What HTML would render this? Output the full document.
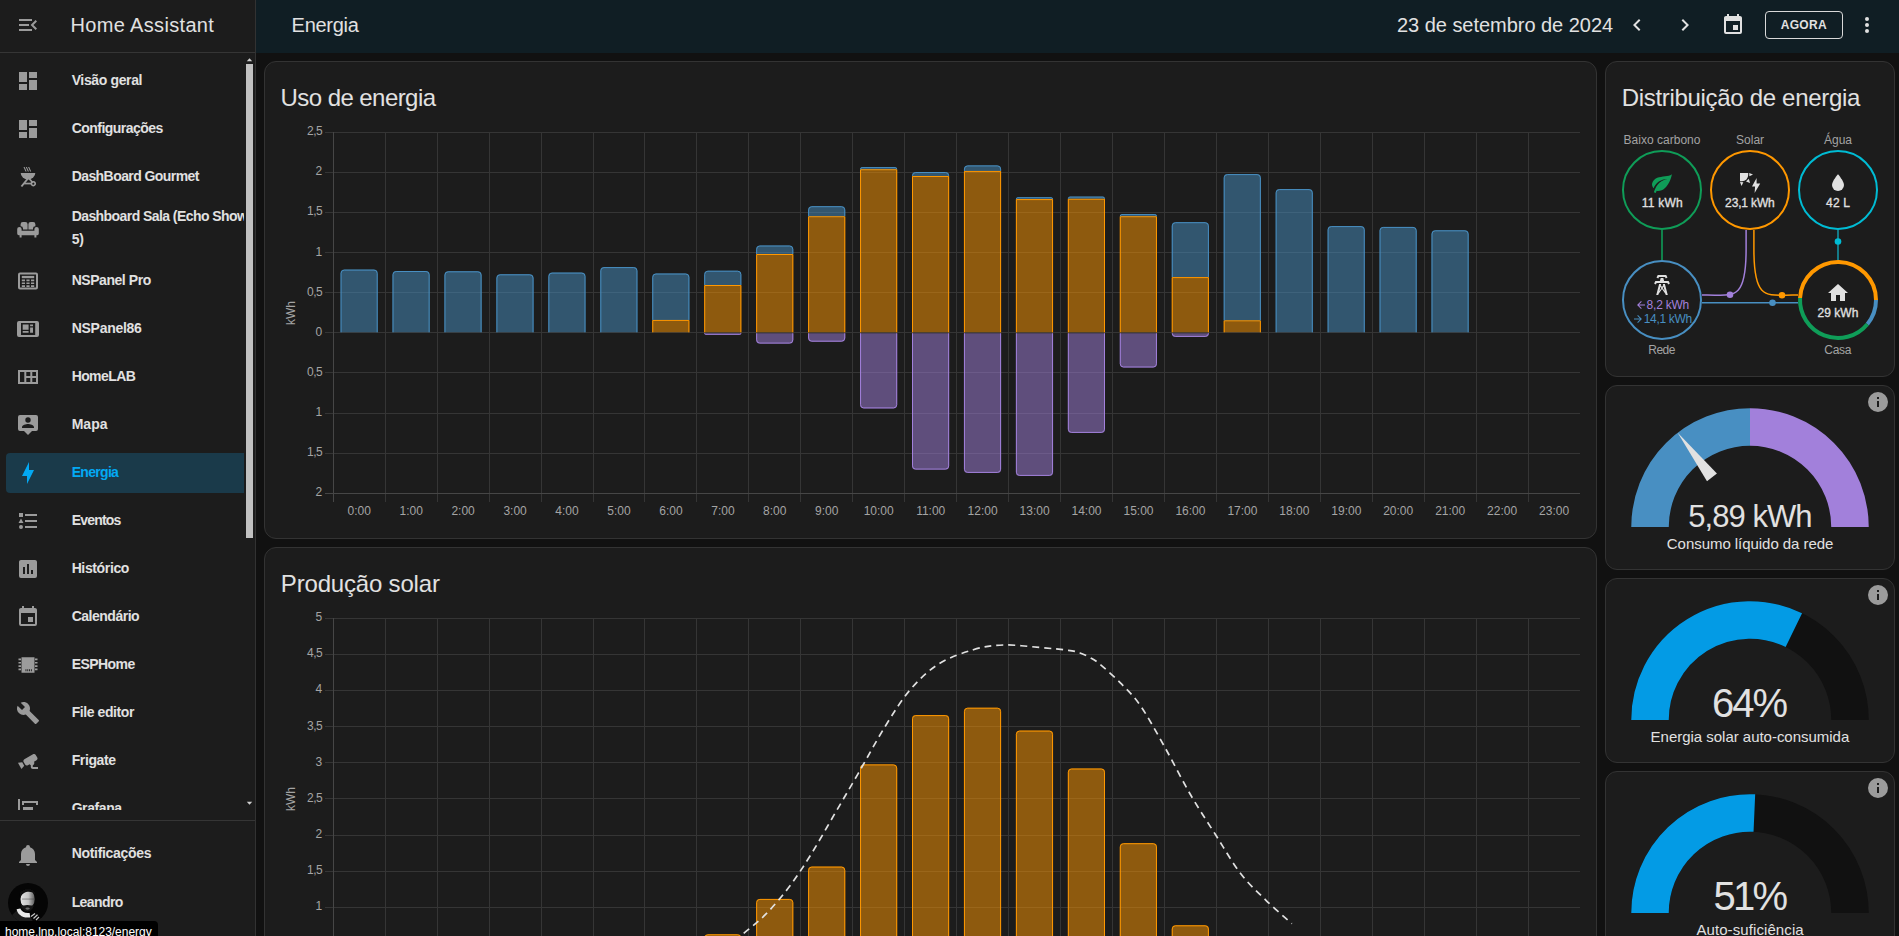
<!DOCTYPE html>
<html lang="pt-BR"><head><meta charset="utf-8"><title>Energia – Home Assistant</title>
<style>
html,body{margin:0;padding:0;background:#111111;overflow:hidden}
body{width:1899px;height:936px;position:relative;font-family:'Liberation Sans',sans-serif;color:#e1e1e1}
.t{position:absolute;white-space:pre}
.i{position:absolute;display:block}
.abs{position:absolute}
header,main,section,aside{display:contents}
.card{position:absolute;background:#1c1c1c;border:1px solid #333333;border-radius:12px;box-sizing:border-box}
svg text{font-family:'Liberation Sans',sans-serif}
</style></head><body>

<header>
<div class="abs" style="left:256px;top:0;width:1643px;height:53px;background:#101e24"></div>
<svg class="i" style="left:1625px;top:13px" width="24" height="24" viewBox="0 0 24 24" fill="#e1e1e1"><path d="M15.41,16.58L10.83,12L15.41,7.41L14,6L8,12L14,18L15.41,16.58Z"/></svg>
<svg class="i" style="left:1673px;top:13px" width="24" height="24" viewBox="0 0 24 24" fill="#e1e1e1"><path d="M8.59,16.58L13.17,12L8.59,7.41L10,6L16,12L10,18L8.59,16.58Z"/></svg>
<svg class="i" style="left:1721px;top:13px" width="24" height="24" viewBox="0 0 24 24" fill="#e1e1e1"><path d="M19,19H5V8H19M16,1V3H8V1H6V3H5C3.89,3 3,3.89 3,5V19A2,2 0 0,0 5,21H19A2,2 0 0,0 21,19V5C21,3.89 20.1,3 19,3H18V1M17,12H12V17H17V12Z"/></svg>
<svg class="i" style="left:1855px;top:13px" width="24" height="24" viewBox="0 0 24 24" fill="#e1e1e1"><path d="M12,16A2,2 0 0,1 14,18A2,2 0 0,1 12,20A2,2 0 0,1 10,18A2,2 0 0,1 12,16M12,10A2,2 0 0,1 14,12A2,2 0 0,1 12,14A2,2 0 0,1 10,12A2,2 0 0,1 12,10M12,4A2,2 0 0,1 14,6A2,2 0 0,1 12,8A2,2 0 0,1 10,6A2,2 0 0,1 12,4Z"/></svg>
<div class="abs" style="left:1765px;top:11px;width:78px;height:28px;box-sizing:border-box;border:1px solid #d9d9d9;border-radius:4px"></div>
<span class="t" style="left:291.60px;top:13.37px;font-size:20px;line-height:24px;letter-spacing:-0.290px;color:#e1e1e1;">Energia</span>
<span class="t" style="left:1397.00px;top:13.07px;font-size:20px;line-height:24px;letter-spacing:-0.035px;color:#e1e1e1;">23 de setembro de 2024</span>
<span class="t" style="left:1780.72px;top:17.74px;font-size:12px;line-height:14px;letter-spacing:0.292px;color:#e1e1e1;font-weight:700;">AGORA</span>
</header>
<main>
<section>
<div class="card" style="left:264px;top:61px;width:1333px;height:478px"></div>
<svg class="i" style="left:264px;top:61px" width="1333" height="478" viewBox="264 61 1333 478">
<path d="M325,132.5H1580 M325,172.5H1580 M325,212.5H1580 M325,252.5H1580 M325,292.5H1580 M325,332.5H1580 M325,372.5H1580 M325,413.5H1580 M325,453.5H1580 M385.5,132V502 M437.5,132V502 M489.5,132V502 M541.5,132V502 M593.5,132V502 M644.5,132V502 M696.5,132V502 M748.5,132V502 M800.5,132V502 M852.5,132V502 M904.5,132V502 M956.5,132V502 M1008.5,132V502 M1060.5,132V502 M1112.5,132V502 M1164.5,132V502 M1216.5,132V502 M1268.5,132V502 M1320.5,132V502 M1372.5,132V502 M1424.5,132V502 M1476.5,132V502 M1528.5,132V502" stroke="#353535" stroke-width="1" fill="none"/>
<path d="M333.5,132V502M325,493.5H1580" stroke="#464646" stroke-width="1" fill="none"/>
<path d="M340.55,332.3V273.3Q340.55,269.6 344.25,269.6H374.00Q377.70,269.6 377.70,273.3V332.3Z" fill="#488fc2" fill-opacity=".5"/><path d="M341.05,332.3V273.3Q341.05,270.1 344.25,270.1H374.00Q377.20,270.1 377.20,273.3V332.3" fill="none" stroke="#488fc2" stroke-width="1"/>
<path d="M392.50,332.3V274.7Q392.50,271.0 396.20,271.0H425.95Q429.65,271.0 429.65,274.7V332.3Z" fill="#488fc2" fill-opacity=".5"/><path d="M393.00,332.3V274.7Q393.00,271.5 396.20,271.5H425.95Q429.15,271.5 429.15,274.7V332.3" fill="none" stroke="#488fc2" stroke-width="1"/>
<path d="M444.45,332.3V275.0Q444.45,271.3 448.15,271.3H477.90Q481.60,271.3 481.60,275.0V332.3Z" fill="#488fc2" fill-opacity=".5"/><path d="M444.95,332.3V275.0Q444.95,271.8 448.15,271.8H477.90Q481.10,271.8 481.10,275.0V332.3" fill="none" stroke="#488fc2" stroke-width="1"/>
<path d="M496.40,332.3V278.0Q496.40,274.3 500.10,274.3H529.85Q533.55,274.3 533.55,278.0V332.3Z" fill="#488fc2" fill-opacity=".5"/><path d="M496.90,332.3V278.0Q496.90,274.8 500.10,274.8H529.85Q533.05,274.8 533.05,278.0V332.3" fill="none" stroke="#488fc2" stroke-width="1"/>
<path d="M548.35,332.3V276.3Q548.35,272.6 552.05,272.6H581.80Q585.50,272.6 585.50,276.3V332.3Z" fill="#488fc2" fill-opacity=".5"/><path d="M548.85,332.3V276.3Q548.85,273.1 552.05,273.1H581.80Q585.00,273.1 585.00,276.3V332.3" fill="none" stroke="#488fc2" stroke-width="1"/>
<path d="M600.30,332.3V270.8Q600.30,267.1 604.00,267.1H633.75Q637.45,267.1 637.45,270.8V332.3Z" fill="#488fc2" fill-opacity=".5"/><path d="M600.80,332.3V270.8Q600.80,267.6 604.00,267.6H633.75Q636.95,267.6 636.95,270.8V332.3" fill="none" stroke="#488fc2" stroke-width="1"/>
<path d="M652.25,319.9H689.40V332.3H652.25Z" fill="#ff9800" fill-opacity=".5"/><path d="M652.75,332.3V320.4H688.90V332.3" fill="none" stroke="#ff9800" stroke-width="1"/>
<path d="M652.25,319.9V277.2Q652.25,273.5 655.95,273.5H685.70Q689.40,273.5 689.40,277.2V319.9Z" fill="#488fc2" fill-opacity=".5"/><path d="M652.75,319.9V277.2Q652.75,274.0 655.95,274.0H685.70Q688.90,274.0 688.90,277.2V319.9" fill="none" stroke="#488fc2" stroke-width="1"/>
<path d="M704.20,285.0H741.35V332.3H704.20Z" fill="#ff9800" fill-opacity=".5"/><path d="M704.70,332.3V285.5H740.85V332.3" fill="none" stroke="#ff9800" stroke-width="1"/>
<path d="M704.20,285V274.4Q704.20,270.7 707.90,270.7H737.65Q741.35,270.7 741.35,274.4V285Z" fill="#488fc2" fill-opacity=".5"/><path d="M704.70,285V274.4Q704.70,271.2 707.90,271.2H737.65Q740.85,271.2 740.85,274.4V285" fill="none" stroke="#488fc2" stroke-width="1"/>
<path d="M704.20,333.3V333.3Q704.20,334.8 705.70,334.8H739.85Q741.35,334.8 741.35,333.3V333.3Z" fill="#a280db" fill-opacity=".5"/><path d="M704.70,333.3V333.3Q704.70,334.3 705.70,334.3H739.85Q740.85,334.3 740.85,333.3V333.3" fill="none" stroke="#a280db" stroke-width="1"/>
<path d="M756.15,254.0H793.30V332.3H756.15Z" fill="#ff9800" fill-opacity=".5"/><path d="M756.65,332.3V254.5H792.80V332.3" fill="none" stroke="#ff9800" stroke-width="1"/>
<path d="M756.15,254V249.2Q756.15,245.5 759.85,245.5H789.60Q793.30,245.5 793.30,249.2V254Z" fill="#488fc2" fill-opacity=".5"/><path d="M756.65,254V249.2Q756.65,246.0 759.85,246.0H789.60Q792.80,246.0 792.80,249.2V254" fill="none" stroke="#488fc2" stroke-width="1"/>
<path d="M756.15,333.3V339.90000000000003Q756.15,343.6 759.85,343.6H789.60Q793.30,343.6 793.30,339.90000000000003V333.3Z" fill="#a280db" fill-opacity=".5"/><path d="M756.65,333.3V339.90000000000003Q756.65,343.1 759.85,343.1H789.60Q792.80,343.1 792.80,339.90000000000003V333.3" fill="none" stroke="#a280db" stroke-width="1"/>
<path d="M808.10,216.2H845.25V332.3H808.10Z" fill="#ff9800" fill-opacity=".5"/><path d="M808.60,332.3V216.7H844.75V332.3" fill="none" stroke="#ff9800" stroke-width="1"/>
<path d="M808.10,216.2V209.89999999999998Q808.10,206.2 811.80,206.2H841.55Q845.25,206.2 845.25,209.89999999999998V216.2Z" fill="#488fc2" fill-opacity=".5"/><path d="M808.60,216.2V209.89999999999998Q808.60,206.7 811.80,206.7H841.55Q844.75,206.7 844.75,209.89999999999998V216.2" fill="none" stroke="#488fc2" stroke-width="1"/>
<path d="M808.10,333.3V338.0Q808.10,341.7 811.80,341.7H841.55Q845.25,341.7 845.25,338.0V333.3Z" fill="#a280db" fill-opacity=".5"/><path d="M808.60,333.3V338.0Q808.60,341.2 811.80,341.2H841.55Q844.75,341.2 844.75,338.0V333.3" fill="none" stroke="#a280db" stroke-width="1"/>
<path d="M860.05,169.2H897.20V332.3H860.05Z" fill="#ff9800" fill-opacity=".5"/><path d="M860.55,332.3V169.7H896.70V332.3" fill="none" stroke="#ff9800" stroke-width="1"/>
<path d="M860.05,169.2V169.2Q860.05,167.1 862.15,167.1H895.10Q897.20,167.1 897.20,169.2V169.2Z" fill="#488fc2" fill-opacity=".5"/><path d="M860.55,169.2V169.2Q860.55,167.6 862.15,167.6H895.10Q896.70,167.6 896.70,169.2V169.2" fill="none" stroke="#488fc2" stroke-width="1"/>
<path d="M860.05,333.3V404.7Q860.05,408.4 863.75,408.4H893.50Q897.20,408.4 897.20,404.7V333.3Z" fill="#a280db" fill-opacity=".5"/><path d="M860.55,333.3V404.7Q860.55,407.9 863.75,407.9H893.50Q896.70,407.9 896.70,404.7V333.3" fill="none" stroke="#a280db" stroke-width="1"/>
<path d="M912.00,176.0H949.15V332.3H912.00Z" fill="#ff9800" fill-opacity=".5"/><path d="M912.50,332.3V176.5H948.65V332.3" fill="none" stroke="#ff9800" stroke-width="1"/>
<path d="M912.00,176V175.7Q912.00,172.0 915.70,172.0H945.45Q949.15,172.0 949.15,175.7V176Z" fill="#488fc2" fill-opacity=".5"/><path d="M912.50,176V175.7Q912.50,172.5 915.70,172.5H945.45Q948.65,172.5 948.65,175.7V176" fill="none" stroke="#488fc2" stroke-width="1"/>
<path d="M912.00,333.3V465.90000000000003Q912.00,469.6 915.70,469.6H945.45Q949.15,469.6 949.15,465.90000000000003V333.3Z" fill="#a280db" fill-opacity=".5"/><path d="M912.50,333.3V465.90000000000003Q912.50,469.1 915.70,469.1H945.45Q948.65,469.1 948.65,465.90000000000003V333.3" fill="none" stroke="#a280db" stroke-width="1"/>
<path d="M963.95,170.9H1001.10V332.3H963.95Z" fill="#ff9800" fill-opacity=".5"/><path d="M964.45,332.3V171.4H1000.60V332.3" fill="none" stroke="#ff9800" stroke-width="1"/>
<path d="M963.95,170.9V169.1Q963.95,165.4 967.65,165.4H997.40Q1001.10,165.4 1001.10,169.1V170.9Z" fill="#488fc2" fill-opacity=".5"/><path d="M964.45,170.9V169.1Q964.45,165.9 967.65,165.9H997.40Q1000.60,165.9 1000.60,169.1V170.9" fill="none" stroke="#488fc2" stroke-width="1"/>
<path d="M963.95,333.3V469.2Q963.95,472.9 967.65,472.9H997.40Q1001.10,472.9 1001.10,469.2V333.3Z" fill="#a280db" fill-opacity=".5"/><path d="M964.45,333.3V469.2Q964.45,472.4 967.65,472.4H997.40Q1000.60,472.4 1000.60,469.2V333.3" fill="none" stroke="#a280db" stroke-width="1"/>
<path d="M1015.90,199.1H1053.05V332.3H1015.90Z" fill="#ff9800" fill-opacity=".5"/><path d="M1016.40,332.3V199.6H1052.55V332.3" fill="none" stroke="#ff9800" stroke-width="1"/>
<path d="M1015.90,199.1V199.1Q1015.90,197.2 1017.80,197.2H1051.15Q1053.05,197.2 1053.05,199.1V199.1Z" fill="#488fc2" fill-opacity=".5"/><path d="M1016.40,199.1V199.1Q1016.40,197.7 1017.80,197.7H1051.15Q1052.55,197.7 1052.55,199.1V199.1" fill="none" stroke="#488fc2" stroke-width="1"/>
<path d="M1015.90,333.3V472.2Q1015.90,475.9 1019.60,475.9H1049.35Q1053.05,475.9 1053.05,472.2V333.3Z" fill="#a280db" fill-opacity=".5"/><path d="M1016.40,333.3V472.2Q1016.40,475.4 1019.60,475.4H1049.35Q1052.55,475.4 1052.55,472.2V333.3" fill="none" stroke="#a280db" stroke-width="1"/>
<path d="M1067.85,198.7H1105.00V332.3H1067.85Z" fill="#ff9800" fill-opacity=".5"/><path d="M1068.35,332.3V199.2H1104.50V332.3" fill="none" stroke="#ff9800" stroke-width="1"/>
<path d="M1067.85,198.7V198.7Q1067.85,196.6 1069.95,196.6H1102.90Q1105.00,196.6 1105.00,198.7V198.7Z" fill="#488fc2" fill-opacity=".5"/><path d="M1068.35,198.7V198.7Q1068.35,197.1 1069.95,197.1H1102.90Q1104.50,197.1 1104.50,198.7V198.7" fill="none" stroke="#488fc2" stroke-width="1"/>
<path d="M1067.85,333.3V429.2Q1067.85,432.9 1071.55,432.9H1101.30Q1105.00,432.9 1105.00,429.2V333.3Z" fill="#a280db" fill-opacity=".5"/><path d="M1068.35,333.3V429.2Q1068.35,432.4 1071.55,432.4H1101.30Q1104.50,432.4 1104.50,429.2V333.3" fill="none" stroke="#a280db" stroke-width="1"/>
<path d="M1119.80,216.2H1156.95V332.3H1119.80Z" fill="#ff9800" fill-opacity=".5"/><path d="M1120.30,332.3V216.7H1156.45V332.3" fill="none" stroke="#ff9800" stroke-width="1"/>
<path d="M1119.80,216.2V216.2Q1119.80,214.1 1121.90,214.1H1154.85Q1156.95,214.1 1156.95,216.2V216.2Z" fill="#488fc2" fill-opacity=".5"/><path d="M1120.30,216.2V216.2Q1120.30,214.6 1121.90,214.6H1154.85Q1156.45,214.6 1156.45,216.2V216.2" fill="none" stroke="#488fc2" stroke-width="1"/>
<path d="M1119.80,333.3V363.8Q1119.80,367.5 1123.50,367.5H1153.25Q1156.95,367.5 1156.95,363.8V333.3Z" fill="#a280db" fill-opacity=".5"/><path d="M1120.30,333.3V363.8Q1120.30,367.0 1123.50,367.0H1153.25Q1156.45,367.0 1156.45,363.8V333.3" fill="none" stroke="#a280db" stroke-width="1"/>
<path d="M1171.75,277.1H1208.90V332.3H1171.75Z" fill="#ff9800" fill-opacity=".5"/><path d="M1172.25,332.3V277.6H1208.40V332.3" fill="none" stroke="#ff9800" stroke-width="1"/>
<path d="M1171.75,277.1V225.89999999999998Q1171.75,222.2 1175.45,222.2H1205.20Q1208.90,222.2 1208.90,225.89999999999998V277.1Z" fill="#488fc2" fill-opacity=".5"/><path d="M1172.25,277.1V225.89999999999998Q1172.25,222.7 1175.45,222.7H1205.20Q1208.40,222.7 1208.40,225.89999999999998V277.1" fill="none" stroke="#488fc2" stroke-width="1"/>
<path d="M1171.75,333.3V333.3Q1171.75,336.9 1175.35,336.9H1205.30Q1208.90,336.9 1208.90,333.3V333.3Z" fill="#a280db" fill-opacity=".5"/><path d="M1172.25,333.3V333.3Q1172.25,336.4 1175.35,336.4H1205.30Q1208.40,336.4 1208.40,333.3V333.3" fill="none" stroke="#a280db" stroke-width="1"/>
<path d="M1223.70,320.3H1260.85V332.3H1223.70Z" fill="#ff9800" fill-opacity=".5"/><path d="M1224.20,332.3V320.8H1260.35V332.3" fill="none" stroke="#ff9800" stroke-width="1"/>
<path d="M1223.70,320.3V177.79999999999998Q1223.70,174.1 1227.40,174.1H1257.15Q1260.85,174.1 1260.85,177.79999999999998V320.3Z" fill="#488fc2" fill-opacity=".5"/><path d="M1224.20,320.3V177.79999999999998Q1224.20,174.6 1227.40,174.6H1257.15Q1260.35,174.6 1260.35,177.79999999999998V320.3" fill="none" stroke="#488fc2" stroke-width="1"/>
<path d="M1275.65,332.3V192.79999999999998Q1275.65,189.1 1279.35,189.1H1309.10Q1312.80,189.1 1312.80,192.79999999999998V332.3Z" fill="#488fc2" fill-opacity=".5"/><path d="M1276.15,332.3V192.79999999999998Q1276.15,189.6 1279.35,189.6H1309.10Q1312.30,189.6 1312.30,192.79999999999998V332.3" fill="none" stroke="#488fc2" stroke-width="1"/>
<path d="M1327.60,332.3V229.79999999999998Q1327.60,226.1 1331.30,226.1H1361.05Q1364.75,226.1 1364.75,229.79999999999998V332.3Z" fill="#488fc2" fill-opacity=".5"/><path d="M1328.10,332.3V229.79999999999998Q1328.10,226.6 1331.30,226.6H1361.05Q1364.25,226.6 1364.25,229.79999999999998V332.3" fill="none" stroke="#488fc2" stroke-width="1"/>
<path d="M1379.55,332.3V230.6Q1379.55,226.9 1383.25,226.9H1413.00Q1416.70,226.9 1416.70,230.6V332.3Z" fill="#488fc2" fill-opacity=".5"/><path d="M1380.05,332.3V230.6Q1380.05,227.4 1383.25,227.4H1413.00Q1416.20,227.4 1416.20,230.6V332.3" fill="none" stroke="#488fc2" stroke-width="1"/>
<path d="M1431.50,332.3V234.0Q1431.50,230.3 1435.20,230.3H1464.95Q1468.65,230.3 1468.65,234.0V332.3Z" fill="#488fc2" fill-opacity=".5"/><path d="M1432.00,332.3V234.0Q1432.00,230.8 1435.20,230.8H1464.95Q1468.15,230.8 1468.15,234.0V332.3" fill="none" stroke="#488fc2" stroke-width="1"/>
<text x="322.3" y="135.2" font-size="12" fill="#a4a4a4" text-anchor="end" letter-spacing="-0.5">2,5</text>
<text x="322.3" y="175.3" font-size="12" fill="#a4a4a4" text-anchor="end">2</text>
<text x="322.3" y="215.4" font-size="12" fill="#a4a4a4" text-anchor="end" letter-spacing="-0.5">1,5</text>
<text x="322.3" y="255.5" font-size="12" fill="#a4a4a4" text-anchor="end">1</text>
<text x="322.3" y="295.6" font-size="12" fill="#a4a4a4" text-anchor="end" letter-spacing="-0.5">0,5</text>
<text x="322.3" y="335.8" font-size="12" fill="#a4a4a4" text-anchor="end">0</text>
<text x="322.3" y="375.9" font-size="12" fill="#a4a4a4" text-anchor="end" letter-spacing="-0.5">0,5</text>
<text x="322.3" y="416.0" font-size="12" fill="#a4a4a4" text-anchor="end">1</text>
<text x="322.3" y="456.1" font-size="12" fill="#a4a4a4" text-anchor="end" letter-spacing="-0.5">1,5</text>
<text x="322.3" y="496.2" font-size="12" fill="#a4a4a4" text-anchor="end">2</text>
<text x="359.2" y="515" font-size="12" fill="#a4a4a4" text-anchor="middle">0:00</text>
<text x="411.2" y="515" font-size="12" fill="#a4a4a4" text-anchor="middle">1:00</text>
<text x="463.1" y="515" font-size="12" fill="#a4a4a4" text-anchor="middle">2:00</text>
<text x="515.1" y="515" font-size="12" fill="#a4a4a4" text-anchor="middle">3:00</text>
<text x="567.0" y="515" font-size="12" fill="#a4a4a4" text-anchor="middle">4:00</text>
<text x="619.0" y="515" font-size="12" fill="#a4a4a4" text-anchor="middle">5:00</text>
<text x="670.9" y="515" font-size="12" fill="#a4a4a4" text-anchor="middle">6:00</text>
<text x="722.9" y="515" font-size="12" fill="#a4a4a4" text-anchor="middle">7:00</text>
<text x="774.8" y="515" font-size="12" fill="#a4a4a4" text-anchor="middle">8:00</text>
<text x="826.8" y="515" font-size="12" fill="#a4a4a4" text-anchor="middle">9:00</text>
<text x="878.7" y="515" font-size="12" fill="#a4a4a4" text-anchor="middle">10:00</text>
<text x="930.7" y="515" font-size="12" fill="#a4a4a4" text-anchor="middle">11:00</text>
<text x="982.6" y="515" font-size="12" fill="#a4a4a4" text-anchor="middle">12:00</text>
<text x="1034.6" y="515" font-size="12" fill="#a4a4a4" text-anchor="middle">13:00</text>
<text x="1086.5" y="515" font-size="12" fill="#a4a4a4" text-anchor="middle">14:00</text>
<text x="1138.5" y="515" font-size="12" fill="#a4a4a4" text-anchor="middle">15:00</text>
<text x="1190.4" y="515" font-size="12" fill="#a4a4a4" text-anchor="middle">16:00</text>
<text x="1242.4" y="515" font-size="12" fill="#a4a4a4" text-anchor="middle">17:00</text>
<text x="1294.3" y="515" font-size="12" fill="#a4a4a4" text-anchor="middle">18:00</text>
<text x="1346.3" y="515" font-size="12" fill="#a4a4a4" text-anchor="middle">19:00</text>
<text x="1398.2" y="515" font-size="12" fill="#a4a4a4" text-anchor="middle">20:00</text>
<text x="1450.2" y="515" font-size="12" fill="#a4a4a4" text-anchor="middle">21:00</text>
<text x="1502.1" y="515" font-size="12" fill="#a4a4a4" text-anchor="middle">22:00</text>
<text x="1554.1" y="515" font-size="12" fill="#a4a4a4" text-anchor="middle">23:00</text>
<text transform="translate(295,313) rotate(-90)" font-size="12" fill="#a4a4a4" text-anchor="middle">kWh</text>
</svg>
<span class="t" style="left:280.54px;top:83.48px;font-size:24px;line-height:29px;letter-spacing:-0.562px;color:#e1e1e1;">Uso de energia</span>
</section>
<section>
<div class="card" style="left:264px;top:547px;width:1333px;height:478px"></div>
<svg class="i" style="left:264px;top:547px" width="1333" height="389" viewBox="264 547 1333 389">
<path d="M325,618.5H1580 M325,654.5H1580 M325,690.5H1580 M325,726.5H1580 M325,762.5H1580 M325,798.5H1580 M325,835.5H1580 M325,871.5H1580 M325,907.5H1580 M325,943.5H1580 M385.5,618V990 M437.5,618V990 M489.5,618V990 M541.5,618V990 M593.5,618V990 M644.5,618V990 M696.5,618V990 M748.5,618V990 M800.5,618V990 M852.5,618V990 M904.5,618V990 M956.5,618V990 M1008.5,618V990 M1060.5,618V990 M1112.5,618V990 M1164.5,618V990 M1216.5,618V990 M1268.5,618V990 M1320.5,618V990 M1372.5,618V990 M1424.5,618V990 M1476.5,618V990 M1528.5,618V990" stroke="#353535" stroke-width="1" fill="none"/>
<path d="M333.5,618V990" stroke="#464646" stroke-width="1" fill="none"/>
<path d="M704.20,979.4V938.0Q704.20,934.3 707.90,934.3H737.65Q741.35,934.3 741.35,938.0V979.4Z" fill="#ff9800" fill-opacity=".5"/><path d="M704.70,979.4V938.0Q704.70,934.8 707.90,934.8H737.65Q740.85,934.8 740.85,938.0V979.4" fill="none" stroke="#ff9800" stroke-width="1"/>
<path d="M756.15,979.4V902.6Q756.15,898.9 759.85,898.9H789.60Q793.30,898.9 793.30,902.6V979.4Z" fill="#ff9800" fill-opacity=".5"/><path d="M756.65,979.4V902.6Q756.65,899.4 759.85,899.4H789.60Q792.80,899.4 792.80,902.6V979.4" fill="none" stroke="#ff9800" stroke-width="1"/>
<path d="M808.10,979.4V870.3000000000001Q808.10,866.6 811.80,866.6H841.55Q845.25,866.6 845.25,870.3000000000001V979.4Z" fill="#ff9800" fill-opacity=".5"/><path d="M808.60,979.4V870.3000000000001Q808.60,867.1 811.80,867.1H841.55Q844.75,867.1 844.75,870.3000000000001V979.4" fill="none" stroke="#ff9800" stroke-width="1"/>
<path d="M860.05,979.4V768.1Q860.05,764.4 863.75,764.4H893.50Q897.20,764.4 897.20,768.1V979.4Z" fill="#ff9800" fill-opacity=".5"/><path d="M860.55,979.4V768.1Q860.55,764.9 863.75,764.9H893.50Q896.70,764.9 896.70,768.1V979.4" fill="none" stroke="#ff9800" stroke-width="1"/>
<path d="M912.00,979.4V718.8000000000001Q912.00,715.1 915.70,715.1H945.45Q949.15,715.1 949.15,718.8000000000001V979.4Z" fill="#ff9800" fill-opacity=".5"/><path d="M912.50,979.4V718.8000000000001Q912.50,715.6 915.70,715.6H945.45Q948.65,715.6 948.65,718.8000000000001V979.4" fill="none" stroke="#ff9800" stroke-width="1"/>
<path d="M963.95,979.4V711.4000000000001Q963.95,707.7 967.65,707.7H997.40Q1001.10,707.7 1001.10,711.4000000000001V979.4Z" fill="#ff9800" fill-opacity=".5"/><path d="M964.45,979.4V711.4000000000001Q964.45,708.2 967.65,708.2H997.40Q1000.60,708.2 1000.60,711.4000000000001V979.4" fill="none" stroke="#ff9800" stroke-width="1"/>
<path d="M1015.90,979.4V734.3000000000001Q1015.90,730.6 1019.60,730.6H1049.35Q1053.05,730.6 1053.05,734.3000000000001V979.4Z" fill="#ff9800" fill-opacity=".5"/><path d="M1016.40,979.4V734.3000000000001Q1016.40,731.1 1019.60,731.1H1049.35Q1052.55,731.1 1052.55,734.3000000000001V979.4" fill="none" stroke="#ff9800" stroke-width="1"/>
<path d="M1067.85,979.4V772.2Q1067.85,768.5 1071.55,768.5H1101.30Q1105.00,768.5 1105.00,772.2V979.4Z" fill="#ff9800" fill-opacity=".5"/><path d="M1068.35,979.4V772.2Q1068.35,769.0 1071.55,769.0H1101.30Q1104.50,769.0 1104.50,772.2V979.4" fill="none" stroke="#ff9800" stroke-width="1"/>
<path d="M1119.80,979.4V846.9000000000001Q1119.80,843.2 1123.50,843.2H1153.25Q1156.95,843.2 1156.95,846.9000000000001V979.4Z" fill="#ff9800" fill-opacity=".5"/><path d="M1120.30,979.4V846.9000000000001Q1120.30,843.7 1123.50,843.7H1153.25Q1156.45,843.7 1156.45,846.9000000000001V979.4" fill="none" stroke="#ff9800" stroke-width="1"/>
<path d="M1171.75,979.4V929.0Q1171.75,925.3 1175.45,925.3H1205.20Q1208.90,925.3 1208.90,929.0V979.4Z" fill="#ff9800" fill-opacity=".5"/><path d="M1172.25,979.4V929.0Q1172.25,925.8 1175.45,925.8H1205.20Q1208.40,925.8 1208.40,929.0V979.4" fill="none" stroke="#ff9800" stroke-width="1"/>
<path d="M728,947C730.3,945.0 735.4,940.5 741.7,935C748.0,929.5 757.8,922.4 765.8,914.2C773.8,906.0 782.4,895.9 790,885.8C797.6,875.6 804.2,865.4 811.7,853.3C819.2,841.2 827.2,826.6 835,813.3C842.8,800.0 850.0,787.7 858.3,773.3C866.6,758.9 876.4,740.6 885,726.7C893.6,712.8 901.1,700.4 910,690C918.9,679.6 927.8,670.9 938.3,664.2C948.8,657.5 962.5,652.9 973.3,649.7C984.1,646.5 992.2,645.4 1003.3,645C1014.4,644.6 1029.2,646.6 1040,647.5C1050.8,648.4 1061.6,649.4 1068.3,650.3C1075.0,651.2 1076.4,651.8 1080,653C1083.6,654.2 1086.7,655.6 1090,657.5C1093.3,659.4 1094.7,659.8 1100,664.2C1105.3,668.7 1114.9,677.2 1121.7,684.2C1128.5,691.2 1133.8,695.9 1141,706.5C1148.2,717.1 1157.0,733.2 1165.2,747.9C1173.4,762.6 1182.0,780.0 1190.4,794.5C1198.8,809.0 1207.2,821.6 1215.6,834.8C1224.0,848.0 1232.4,862.9 1240.8,873.8C1249.2,884.7 1257.5,892.0 1266,900.3C1274.5,908.6 1287.6,919.8 1291.9,923.7" fill="none" stroke="#e1e1e1" stroke-width="1.7" stroke-dasharray="7 5" stroke-dashoffset="3"/>
<text x="322.3" y="621.2" font-size="12" fill="#a4a4a4" text-anchor="end">5</text>
<text x="322.3" y="657.3" font-size="12" fill="#a4a4a4" text-anchor="end" letter-spacing="-0.5">4,5</text>
<text x="322.3" y="693.4" font-size="12" fill="#a4a4a4" text-anchor="end">4</text>
<text x="322.3" y="729.6" font-size="12" fill="#a4a4a4" text-anchor="end" letter-spacing="-0.5">3,5</text>
<text x="322.3" y="765.7" font-size="12" fill="#a4a4a4" text-anchor="end">3</text>
<text x="322.3" y="801.8" font-size="12" fill="#a4a4a4" text-anchor="end" letter-spacing="-0.5">2,5</text>
<text x="322.3" y="837.9" font-size="12" fill="#a4a4a4" text-anchor="end">2</text>
<text x="322.3" y="874.0" font-size="12" fill="#a4a4a4" text-anchor="end" letter-spacing="-0.5">1,5</text>
<text x="322.3" y="910.2" font-size="12" fill="#a4a4a4" text-anchor="end">1</text>
<text transform="translate(295,799) rotate(-90)" font-size="12" fill="#a4a4a4" text-anchor="middle">kWh</text>
</svg>
<span class="t" style="left:280.84px;top:569.48px;font-size:24px;line-height:29px;letter-spacing:-0.181px;color:#e1e1e1;">Produção solar</span>
</section>
<section>
<div class="card" style="left:1605px;top:61px;width:290px;height:316px"></div>
<svg class="i" style="left:1605px;top:61px" width="290" height="316" viewBox="1605 61 290 316">
<path d="M1662,230V260" stroke="#0f9d58" stroke-width="1.6"/>
<path d="M1838,230V260" stroke="#1593a3" stroke-width="1.6"/>
<defs><clipPath id="fl"><rect x="1702" y="228" width="96" height="110"/></clipPath></defs>
<g clip-path="url(#fl)"><g transform="translate(1685,230) scale(1.3)" fill="none" stroke-width="1.15">
<path d="M47,0 v15 c0,40 -10,35 -30,35 h-20" stroke="#a280db"/>
<path d="M53,0 v15 c0,40 10,35 30,35 h25" stroke="#ff9800"/>
<path d="M0,56 H100" stroke="#488fc2"/>
</g></g>
<circle cx="1730" cy="294.7" r="3.3" fill="#a280db"/><circle cx="1782" cy="295.2" r="3.3" fill="#ff9800"/><circle cx="1772.5" cy="302.8" r="3.3" fill="#488fc2"/><circle cx="1838" cy="241.5" r="3.3" fill="#00bcd4"/>
<circle cx="1662" cy="190" r="39" fill="none" stroke="#0f9d58" stroke-width="2"/>
<circle cx="1750" cy="190" r="39" fill="none" stroke="#ff9800" stroke-width="2"/>
<circle cx="1838" cy="190" r="39" fill="none" stroke="#00bcd4" stroke-width="2"/>
<circle cx="1662" cy="300" r="39" fill="none" stroke="#488fc2" stroke-width="2"/>
<path d="M1876.00,300.00A38,38 0 0 1 1867.32,324.17" fill="none" stroke="#488fc2" stroke-width="4"/>
<path d="M1867.32,324.17A38,38 0 0 1 1800.05,298.01" fill="none" stroke="#0f9d58" stroke-width="4"/>
<path d="M1800.05,298.01A38,38 0 0 1 1876.00,300.00" fill="none" stroke="#ff9800" stroke-width="4"/>
</svg>
<svg class="i" style="left:1650px;top:171px" width="24" height="24" viewBox="0 0 24 24" fill="#0f9d58"><path d="M17,8C8,10 5.9,16.17 3.82,21.34L5.71,22L6.66,19.7C7.14,19.87 7.64,20 8,20C19,20 22,3 22,3C21,5 14,5.25 9,6.25C4,7.25 2,11.5 2,13.5C2,15.5 3.75,17.25 3.75,17.25C7,8 17,8 17,8Z"/></svg>
<svg class="i" style="left:1738px;top:171px" width="24" height="24" viewBox="0 0 24 24" fill="#e1e1e1"><path d="M2,2H10.2V4A6.2,6.2 0 0 1 4,10.2H2Z"/><path d="M11.2,2L15,3.6L11.4,5.3Z"/><path d="M10.7,7.8L12.1,11.9L8,10.4Z"/><path d="M2,11.1L5.4,11.3L3.5,15Z"/><path d="M18.6,7.1L14,15.4H17.1L16.6,21.9L22.2,12.4H18.6Z"/></svg>
<svg class="i" style="left:1826px;top:171px" width="24" height="24" viewBox="0 0 24 24" fill="#e1e1e1"><path d="M12,20A6,6 0 0,1 6,14C6,10 12,3.25 12,3.25C12,3.25 18,10 18,14A6,6 0 0,1 12,20Z"/></svg>
<svg class="i" style="left:1650px;top:272.7px" width="24" height="24" viewBox="0 0 24 24" fill="#e1e1e1"><path d="M8.28,5.45L6.5,4.55L7.76,2H16.23L17.5,4.55L15.72,5.44L15,4H9L8.28,5.45M18.62,8H14.09L13.3,5H10.7L9.91,8H5.38L4.1,10.55L5.89,11.44L6.62,10H17.38L18.1,11.45L19.89,10.56L18.62,8M17.77,22H15.7L15.46,21.1L12,15.9L8.53,21.1L8.3,22H6.23L9.12,11H11.19L10.83,12.35L12,14.1L13.16,12.35L12.81,11H14.88L17.77,22M11.4,15L10.5,13.65L9.32,18.13L11.4,15M14.68,18.12L13.5,13.64L12.6,15L14.68,18.12Z"/></svg>
<svg class="i" style="left:1826px;top:281px" width="24" height="24" viewBox="0 0 24 24" fill="#e1e1e1"><path d="M10,20V14H14V20H19V12H22L12,3L2,12H5V20H10Z"/></svg>
<svg class="i" style="left:1634.9px;top:299.0px" width="12" height="12" viewBox="0 0 24 24" fill="#a280db"><path d="M20,11V13H8L13.5,18.5L12.08,19.92L4.16,12L12.08,4.08L13.5,5.5L8,11H20Z"/></svg>
<svg class="i" style="left:1631.9px;top:312.8px" width="12" height="12" viewBox="0 0 24 24" fill="#488fc2"><path d="M4,11V13H16L10.5,18.5L11.92,19.92L19.84,12L11.92,4.08L10.5,5.5L16,11H4Z"/></svg>
<span class="t" style="left:1621.74px;top:83.48px;font-size:24px;line-height:29px;letter-spacing:-0.314px;color:#e1e1e1;">Distribuição de energia</span>
<span class="t" style="left:1623.52px;top:133.04px;font-size:12px;line-height:14px;letter-spacing:0.018px;color:#a3a3a3;">Baixo carbono</span>
<span class="t" style="left:1736.02px;top:133.04px;font-size:12px;line-height:14px;letter-spacing:0.006px;color:#a3a3a3;">Solar</span>
<span class="t" style="left:1824.12px;top:133.04px;font-size:12px;line-height:14px;letter-spacing:-0.030px;color:#a3a3a3;">Água</span>
<span class="t" style="left:1648.32px;top:343.14px;font-size:12px;line-height:14px;letter-spacing:-0.549px;color:#a3a3a3;">Rede</span>
<span class="t" style="left:1824.32px;top:343.14px;font-size:12px;line-height:14px;letter-spacing:-0.325px;color:#a3a3a3;">Casa</span>
<span class="t" style="left:1641.72px;top:195.64px;font-size:12px;line-height:14px;letter-spacing:0.229px;color:#e1e1e1;-webkit-text-stroke:0.3px #e1e1e1;">11 kWh</span>
<span class="t" style="left:1725.12px;top:195.64px;font-size:12px;line-height:14px;letter-spacing:-0.152px;color:#e1e1e1;-webkit-text-stroke:0.3px #e1e1e1;">23,1 kWh</span>
<span class="t" style="left:1826.02px;top:195.64px;font-size:12px;line-height:14px;letter-spacing:0.194px;color:#e1e1e1;-webkit-text-stroke:0.3px #e1e1e1;">42 L</span>
<span class="t" style="left:1817.62px;top:305.54px;font-size:12px;line-height:14px;letter-spacing:0.011px;color:#e1e1e1;-webkit-text-stroke:0.3px #e1e1e1;">29 kWh</span>
<span class="t" style="left:1646.62px;top:297.54px;font-size:12px;line-height:14px;letter-spacing:-0.229px;color:#a280db;">8,2 kWh</span>
<span class="t" style="left:1643.72px;top:311.84px;font-size:12px;line-height:14px;letter-spacing:-0.309px;color:#488fc2;">14,1 kWh</span>
</section>
<section>
<div class="card" style="left:1605px;top:385px;width:290px;height:185px"></div>
<svg class="i" style="left:1625px;top:402px" width="250" height="126" viewBox="-50 -50 100 50.4"><path d="M-40,0A40,40 0 0 1 0,-40" fill="none" stroke="#488fc2" stroke-width="15"/><path d="M0,-40A40,40 0 0 1 40,0" fill="none" stroke="#a280db" stroke-width="15"/><path d="M-25,-2.5L-47.5,0L-25,2.5z" fill="#e1e1e1" transform="rotate(52.5)"/></svg>
<svg class="i" style="left:1866px;top:390px" width="24" height="24" viewBox="0 0 24 24" fill="#9b9b9b"><path d="M13,9H11V7H13M13,17H11V11H13M12,2A10,10 0 0,0 2,12A10,10 0 0,0 12,22A10,10 0 0,0 22,12A10,10 0 0,0 12,2Z"/></svg>
<span class="t" style="left:1688.16px;top:497.76px;font-size:31px;line-height:37px;letter-spacing:-0.940px;color:#e1e1e1;">5,89 kWh</span>
<span class="t" style="left:1666.80px;top:534.80px;font-size:15px;line-height:18px;letter-spacing:-0.044px;color:#e1e1e1;">Consumo líquido da rede</span>
</section>
<section>
<div class="card" style="left:1605px;top:578px;width:290px;height:185px"></div>
<svg class="i" style="left:1625px;top:595px" width="250" height="126" viewBox="-50 -50 100 50.4"><path d="M-40,0A40,40 0 0 1 40,0" fill="none" stroke="#111111" stroke-width="15"/><path d="M-40,0A40,40 0 0 1 17.535,-35.952" fill="none" stroke="#039be5" stroke-width="15"/></svg>
<svg class="i" style="left:1866px;top:583px" width="24" height="24" viewBox="0 0 24 24" fill="#9b9b9b"><path d="M13,9H11V7H13M13,17H11V11H13M12,2A10,10 0 0,0 2,12A10,10 0 0,0 12,22A10,10 0 0,0 22,12A10,10 0 0,0 12,2Z"/></svg>
<span class="t" style="left:1711.90px;top:679.14px;font-size:40px;line-height:48px;letter-spacing:-1.881px;color:#e1e1e1;">64%</span>
<span class="t" style="left:1650.60px;top:727.80px;font-size:15px;line-height:18px;letter-spacing:-0.023px;color:#e1e1e1;">Energia solar auto-consumida</span>
</section>
<section>
<div class="card" style="left:1605px;top:771px;width:290px;height:185px"></div>
<svg class="i" style="left:1625px;top:788px" width="250" height="126" viewBox="-50 -50 100 50.4"><path d="M-40,0A40,40 0 0 1 40,0" fill="none" stroke="#111111" stroke-width="15"/><path d="M-40,0A40,40 0 0 1 1.745,-39.962" fill="none" stroke="#039be5" stroke-width="15"/></svg>
<svg class="i" style="left:1866px;top:776px" width="24" height="24" viewBox="0 0 24 24" fill="#9b9b9b"><path d="M13,9H11V7H13M13,17H11V11H13M12,2A10,10 0 0,0 2,12A10,10 0 0,0 12,22A10,10 0 0,0 22,12A10,10 0 0,0 12,2Z"/></svg>
<span class="t" style="left:1713.60px;top:872.14px;font-size:40px;line-height:48px;letter-spacing:-2.731px;color:#e1e1e1;">51%</span>
<span class="t" style="left:1696.40px;top:920.80px;font-size:15px;line-height:18px;letter-spacing:0.091px;color:#e1e1e1;">Auto-suficiência</span>
</section>
</main>
<aside>
<div class="abs" style="left:0;top:0;width:255px;height:936px;background:#1c1c1c;border-right:1px solid #323232"></div>
<div class="abs" style="left:0;top:52px;width:255px;height:1px;background:#353535"></div>
<div class="abs" style="left:0;top:820px;width:255px;height:1px;background:#353535"></div>
<div class="abs" style="left:6px;top:453px;width:238px;height:40px;border-radius:4px 0 0 4px;background:#1a3a4a"></div>
<div class="abs" style="left:246px;top:64px;width:7px;height:474px;background:#c1c1c1"></div>
<svg class="i" style="left:244px;top:55px" width="12" height="10" viewBox="0 0 12 10"><path d="M2.8,6.2L5.5,3.2L8.2,6.2Z" fill="#d0d0d0"/></svg>
<svg class="i" style="left:244px;top:798px" width="12" height="10" viewBox="0 0 12 10"><path d="M2.8,3.8L5.5,6.8L8.2,3.8Z" fill="#d0d0d0"/></svg>
<svg class="i" style="left:16px;top:13px" width="24" height="24" viewBox="0 0 24 24" fill="#9b9b9b"><path d="M21,15.61L19.59,17L14.58,12L19.59,7L21,8.39L17.44,12L21,15.61M3,6H16V8H3V6M3,13V11H13V13H3M3,18V16H16V18H3Z"/></svg>
<svg class="i" style="left:16px;top:69px" width="24" height="24" viewBox="0 0 24 24" fill="#9b9b9b"><path d="M13,3V9H21V3M13,21H21V11H13M3,21H11V15H3M3,13H11V3H3V13Z"/></svg>
<svg class="i" style="left:16px;top:117px" width="24" height="24" viewBox="0 0 24 24" fill="#9b9b9b"><path d="M13,3V9H21V3M13,21H21V11H13M3,21H11V15H3M3,13H11V3H3V13Z"/></svg>
<svg class="i" style="left:16px;top:165px" width="24" height="24" viewBox="0 0 24 24" fill="#9b9b9b"><path d="M4.7,8H19.3A7.3,6.4 0 0 1 4.7,8Z"/><path d="M8.6,2l2,4.6h-1.1l-2-4.6zM10.9,2l2,4.6h-1.1l-2-4.6zM13.2,2l2,4.6h-1.1l-2-4.6z"/><path d="M11.6,12.6l1.5,1L6.2,22l-1.5-1z"/><path d="M12.6,14.3l1.3-1.1 3.6,4-1.3,1.1z"/><path d="M8.2,17.7h7v1.7h-7z"/><path fill-rule="evenodd" d="M17.3,16a2.7,2.7 0 1 0 .01,0zM17.3,17.6a1.1,1.1 0 1 1-.01,0z"/></svg>
<svg class="i" style="left:16px;top:217px" width="24" height="24" viewBox="0 0 24 24" fill="#9b9b9b"><path d="M4.6,9.2V7.3A2.3,2.3 0 0 1 6.9,5h2.4a2.3,2.3 0 0 1 2.3,2.3V12.6H7V11.6A2.4,2.4 0 0 0 4.6,9.2z"/><path d="M19.4,9.2V7.3A2.3,2.3 0 0 0 17.1,5h-2.4a2.3,2.3 0 0 0-2.3,2.3V12.6H17V11.6A2.4,2.4 0 0 1 19.4,9.2z"/><path d="M3.4,9.9A2.2,2.2 0 0 0 1.2,12.1V16.6A1.6,1.6 0 0 0 2.8,18.2H3.6V20.4H5.6V18.2H18.4V20.4H20.4V18.2H21.2A1.6,1.6 0 0 0 22.8,16.6V12.1A2.2,2.2 0 0 0 20.6,9.9A2.2,2.2 0 0 0 18.4,12.1V13.8H5.6V12.1A2.2,2.2 0 0 0 3.4,9.9z"/></svg>
<svg class="i" style="left:16px;top:269px" width="24" height="24" viewBox="0 0 24 24" fill="#9b9b9b"><path fill-rule="evenodd" d="M4,3.5H20A2,2 0 0 1 22,5.5V18.5A2,2 0 0 1 20,20.5H4A2,2 0 0 1 2,18.5V5.5A2,2 0 0 1 4,3.5zM4,5.5V18.5H20V5.5z"/><path d="M5.8,6.9h12.4v2.3H5.8z"/><path d="M5.8,10.6h3.2v1.7H5.8zM10.4,10.6h3.2v1.7h-3.2zM15,10.6h3.2v1.7H15zM5.8,13.4h3.2v1.7H5.8zM10.4,13.4h3.2v1.7h-3.2zM15,13.4h3.2v1.7H15zM5.8,16.2h3.2v1.7H5.8zM10.4,16.2h3.2v1.7h-3.2zM15,16.2h3.2v1.7H15z"/></svg>
<svg class="i" style="left:16px;top:317px" width="24" height="24" viewBox="0 0 24 24" fill="#9b9b9b"><path fill-rule="evenodd" d="M3,4H21A2,2 0 0 1 23,6V18A2,2 0 0 1 21,20H3A2,2 0 0 1 1,18V6A2,2 0 0 1 3,4zM5,6V18H19.2V6z"/><path d="M6.7,7.6h5.9v5.1H6.7zM14.1,7.6H17v1.7h-2.9zM14.1,10.5H17v5.3h-2.9zM6.7,13.9h5.9v1.9H6.7z"/></svg>
<svg class="i" style="left:16px;top:365px" width="24" height="24" viewBox="0 0 24 24" fill="#9b9b9b"><path fill-rule="evenodd" d="M2,5H22V19H2zM4,7V17H8.3V7zM10.3,7V11H14.3V7zM16.3,7V11H20V7zM10.3,13V17H14.3V13zM16.3,13V17H20V13z"/></svg>
<svg class="i" style="left:16px;top:413px" width="24" height="24" viewBox="0 0 24 24" fill="#9b9b9b"><path d="M20,2H4A2,2 0 0,0 2,4V16A2,2 0 0,0 4,18H8L12,22L16,18H20A2,2 0 0,0 22,16V4A2,2 0 0,0 20,2M12,4.3A2.7,2.7 0 0,1 14.7,7A2.7,2.7 0 0,1 12,9.7A2.7,2.7 0 0,1 9.3,7A2.7,2.7 0 0,1 12,4.3M18,15H6V14.1C6,12.1 10,11 12,11C14,11 18,12.1 18,14.1V15Z"/></svg>
<svg class="i" style="left:16px;top:461px" width="24" height="24" viewBox="0 0 24 24" fill="#03a9f4"><path d="M11,15H6L13,1V9H18L11,23V15Z"/></svg>
<svg class="i" style="left:16px;top:509px" width="24" height="24" viewBox="0 0 24 24" fill="#9b9b9b"><path d="M5,9.5L7.5,14H2.5L5,9.5M3,4H7V8H3V4M5,20A2,2 0 0,0 7,18A2,2 0 0,0 5,16A2,2 0 0,0 3,18A2,2 0 0,0 5,20M9,5V7H21V5H9M9,19H21V17H9V19M9,13H21V11H9V13Z"/></svg>
<svg class="i" style="left:16px;top:557px" width="24" height="24" viewBox="0 0 24 24" fill="#9b9b9b"><path d="M17,17H15V13H17M13,17H11V7H13M9,17H7V10H9M19,3H5C3.89,3 3,3.89 3,5V19A2,2 0 0,0 5,21H19A2,2 0 0,0 21,19V5C21,3.89 20.1,3 19,3Z"/></svg>
<svg class="i" style="left:16px;top:605px" width="24" height="24" viewBox="0 0 24 24" fill="#9b9b9b"><path d="M19,19H5V8H19M16,1V3H8V1H6V3H5C3.89,3 3,3.89 3,5V19A2,2 0 0,0 5,21H19A2,2 0 0,0 21,19V5C21,3.89 20.1,3 19,3H18V1M17,12H12V17H17V12Z"/></svg>
<svg class="i" style="left:16px;top:653px" width="24" height="24" viewBox="0 0 24 24" fill="#9b9b9b"><path fill-rule="evenodd" d="M5.5,4.2H18.5V19.8H5.5zM9.5,16.2V18.2H10.4V16.2zM11.3,16.2V18.2H12.2V16.2zM13.1,16.2V18.2H14V16.2zM14.9,16.2V18.2H15.8V16.2z"/><path d="M2.5,5.6H5v1.7H2.5zM2.5,8.9H5v1.7H2.5zM2.5,12.2H5v1.7H2.5zM2.5,15.5H5v1.7H2.5zM19,5.6h2.5v1.7H19zM19,8.9h2.5v1.7H19zM19,12.2h2.5v1.7H19zM19,15.5h2.5v1.7H19z"/></svg>
<svg class="i" style="left:16px;top:701px" width="24" height="24" viewBox="0 0 24 24" fill="#9b9b9b"><path d="M22.7,19L13.6,9.9C14.5,7.6 14,4.9 12.1,3C10.1,1 7.1,0.6 4.7,1.7L9,6L6,9L1.6,4.7C0.4,7.1 0.9,10.1 2.9,12.1C4.8,14 7.5,14.5 9.8,13.6L18.9,22.7C19.3,23.1 19.9,23.1 20.3,22.7L22.6,20.4C23.1,20 23.1,19.3 22.7,19Z"/></svg>
<svg class="i" style="left:16px;top:749px" width="24" height="24" viewBox="0 0 24 24" fill="#9b9b9b"><path d="M18.15,4.94C17.77,4.91 17.37,5 17,5.2L8.35,10.2C7.39,10.76 7.07,12 7.62,12.94L9.12,15.53C9.67,16.5 10.89,16.82 11.85,16.27L13.65,15.23C13.92,15.69 14.32,16.06 14.81,16.27V18.04C14.81,19.13 15.7,20 16.81,20H22V18.04H16.81V16.27C17.72,15.87 18.31,14.97 18.31,14C18.31,13.54 18.19,13.11 17.97,12.73L20.5,11.27C21.47,10.71 21.8,9.5 21.24,8.53L19.74,5.94C19.4,5.34 18.79,5 18.15,4.94M6.22,13.17L2,13.87L2.75,15.17L4.75,18.63L5.5,19.93L8.22,16.63L6.22,13.17Z"/></svg>
<div class="abs" style="left:16px;top:797px;width:24px;height:13px;overflow:hidden"><svg class="i" style="left:0px;top:0px" width="24" height="24" viewBox="0 0 24 24" fill="#9b9b9b"><path d="M2,2H4V20H22V22H2V2M7,10H17V13H7V10M11,15H21V18H11V15M6,4H22V8H20V6H8V8H6V4Z"/></svg></div>
<svg class="i" style="left:16px;top:843px" width="24" height="24" viewBox="0 0 24 24" fill="#9b9b9b"><path d="M21,19V20H3V19L5,17V11C5,7.9 7.03,5.17 10,4.29C10,4.19 10,4.1 10,4A2,2 0 0,1 12,2A2,2 0 0,1 14,4C14,4.1 14,4.19 14,4.29C16.97,5.17 19,7.9 19,11V17L21,19M14,21A2,2 0 0,1 12,23A2,2 0 0,1 10,21"/></svg>
<svg class="i" style="left:8px;top:883px" width="40" height="40" viewBox="0 0 40 40"><defs><clipPath id="av"><circle cx="20" cy="20" r="20"/></clipPath><linearGradient id="fg" x1="0" x2="1" y1="0" y2="0"><stop offset="0" stop-color="#e2e2e2"/><stop offset=".55" stop-color="#c4c4c4"/><stop offset="1" stop-color="#5a5a5a"/></linearGradient><filter id="bl" x="-10%" y="-10%" width="120%" height="120%"><feGaussianBlur stdDeviation=".55"/></filter></defs><g clip-path="url(#av)"><rect width="40" height="40" fill="#050505"/><g filter="url(#bl)"><path d="M1,40C3,31 8,28.5 9.5,27C11,32 16,36 23,35L26,40Z" fill="#1b1b1b"/><path d="M8.6,26.3C9.6,31.5 14.5,35.6 22.3,34.4L21.6,30C17,30.6 13.4,28.6 12.3,25.5Z" fill="#e8e8e8"/><ellipse cx="19.6" cy="16" rx="7.1" ry="9.6" fill="url(#fg)"/><path d="M11.5,13C11,4 28,4 27.2,12C25,7.2 14.5,7.2 12.6,14.5Z" fill="#0a0a0a"/><rect x="14" y="15.3" width="12" height="1.6" fill="#3c3c3c" opacity=".3"/><path d="M12.6,20.5C12.8,31 26,31 26,21C24.5,23.5 21.8,22 19.4,22C17,22 14,23.5 12.6,20.5Z" fill="#121212"/><ellipse cx="19.6" cy="25.6" rx="2.2" ry="1.1" fill="#6a6a6a"/><path d="M23,33.5L27,30.5M25.5,35.5L29.5,31.8M28,37L31,34" stroke="#c8c8c8" stroke-width="1.2" fill="none"/></g></g></svg>
<span class="t" style="left:70.60px;top:13.37px;font-size:20px;line-height:24px;letter-spacing:0.334px;color:#e1e1e1;">Home Assistant</span>
<span class="t" style="left:71.64px;top:71.65px;font-size:14px;line-height:17px;letter-spacing:-0.357px;color:#e1e1e1;font-weight:700;">Visão geral</span>
<span class="t" style="left:71.64px;top:119.65px;font-size:14px;line-height:17px;letter-spacing:-0.520px;color:#e1e1e1;font-weight:700;">Configurações</span>
<span class="t" style="left:71.64px;top:167.65px;font-size:14px;line-height:17px;letter-spacing:-0.565px;color:#e1e1e1;font-weight:700;">DashBoard Gourmet</span>
<div class="abs" style="left:0;top:200px;width:244px;height:40px;overflow:hidden"><div style="position:absolute;left:0;top:-200px"><span class="t" style="left:71.64px;top:207.85px;font-size:14px;line-height:17px;letter-spacing:-0.565px;color:#e1e1e1;font-weight:700;">Dashboard Sala (Echo Show</span></div></div>
<span class="t" style="left:71.64px;top:231.45px;font-size:14px;line-height:17px;letter-spacing:-0.173px;color:#e1e1e1;font-weight:700;">5)</span>
<span class="t" style="left:71.64px;top:271.65px;font-size:14px;line-height:17px;letter-spacing:-0.445px;color:#e1e1e1;font-weight:700;">NSPanel Pro</span>
<span class="t" style="left:71.64px;top:319.65px;font-size:14px;line-height:17px;letter-spacing:-0.262px;color:#e1e1e1;font-weight:700;">NSPanel86</span>
<span class="t" style="left:71.64px;top:367.65px;font-size:14px;line-height:17px;letter-spacing:-0.582px;color:#e1e1e1;font-weight:700;">HomeLAB</span>
<span class="t" style="left:71.64px;top:415.65px;font-size:14px;line-height:17px;letter-spacing:0.061px;color:#e1e1e1;font-weight:700;">Mapa</span>
<span class="t" style="left:71.64px;top:463.65px;font-size:14px;line-height:17px;letter-spacing:-0.680px;color:#03a9f4;font-weight:700;">Energia</span>
<span class="t" style="left:71.64px;top:511.65px;font-size:14px;line-height:17px;letter-spacing:-0.781px;color:#e1e1e1;font-weight:700;">Eventos</span>
<span class="t" style="left:71.64px;top:559.65px;font-size:14px;line-height:17px;letter-spacing:-0.363px;color:#e1e1e1;font-weight:700;">Histórico</span>
<span class="t" style="left:71.64px;top:607.65px;font-size:14px;line-height:17px;letter-spacing:-0.487px;color:#e1e1e1;font-weight:700;">Calendário</span>
<span class="t" style="left:71.64px;top:655.65px;font-size:14px;line-height:17px;letter-spacing:-0.540px;color:#e1e1e1;font-weight:700;">ESPHome</span>
<span class="t" style="left:71.64px;top:703.65px;font-size:14px;line-height:17px;letter-spacing:-0.413px;color:#e1e1e1;font-weight:700;">File editor</span>
<span class="t" style="left:71.64px;top:751.65px;font-size:14px;line-height:17px;letter-spacing:-0.368px;color:#e1e1e1;font-weight:700;">Frigate</span>
<div class="abs" style="left:0;top:790px;width:244px;height:20px;overflow:hidden"><div style="position:absolute;left:0;top:-790px"><span class="t" style="left:71.64px;top:799.65px;font-size:14px;line-height:17px;letter-spacing:-0.407px;color:#e1e1e1;font-weight:700;">Grafana</span></div></div>
<span class="t" style="left:71.64px;top:845.45px;font-size:14px;line-height:17px;letter-spacing:-0.297px;color:#e1e1e1;font-weight:700;">Notificações</span>
<span class="t" style="left:71.64px;top:893.65px;font-size:14px;line-height:17px;letter-spacing:-0.576px;color:#e1e1e1;font-weight:700;">Leandro</span>
</aside>
<div>
<div class="abs" style="left:0;top:921px;width:158px;height:15px;background:#000;border-radius:0 4px 0 0"></div>
<span class="t" style="left:5.02px;top:924.54px;font-size:12px;line-height:14px;letter-spacing:-0.032px;color:#ffffff;">home.lnp.local:8123/energy</span>
</div>
</body></html>
